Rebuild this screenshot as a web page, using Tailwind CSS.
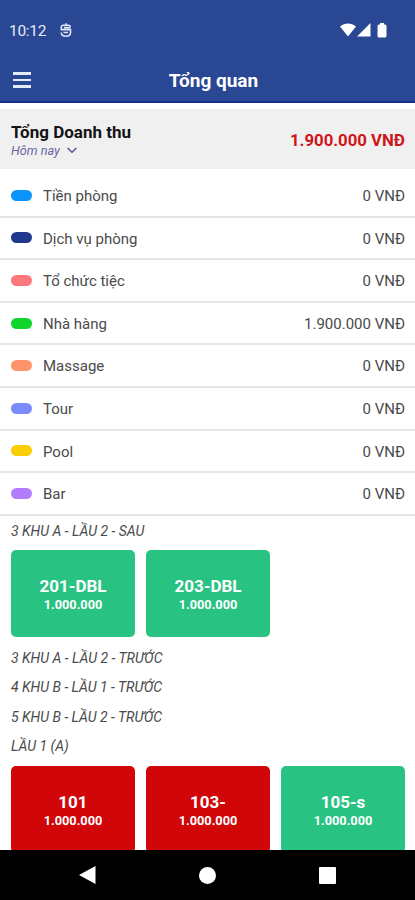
<!DOCTYPE html>
<html lang="vi">
<head>
  <meta charset="UTF-8" />
  <title>Tổng quan</title>
  <meta name="viewport" content="width=device-width, initial-scale=1.0" />
  <script src="https://cdn.jsdelivr.net/npm/@tailwindcss/browser@4"></script>
</head>
<body class="bg-white">
  <div class="w-[415px] h-[900px] overflow-hidden flex flex-col font-['Roboto','Noto_Sans',sans-serif] text-[#4a4a4a]">

    <!-- Status bar and title -->
    <header class="h-[103px] shrink-0 bg-[#2a4793] border-b-2 border-[#12308a] text-white">
      <div class="h-[60px] flex items-center pl-[9px] pr-[28px]">
        <span class="w-[38px] pt-[1px] text-[15.500px] leading-5 tracking-[-0.3px] text-[#e6ebf8]">10:12</span>
        <svg class="ml-[13px] w-3 h-[15px]" viewBox="0 0 12 15" fill="none" stroke="#dce4f6" stroke-width="1.6">
          <path d="M10.500 3.800Q10 2.300 8.500 2.300H3.500Q1.300 2.300 1.300 4.500V6.600H10.500V9.500Q10.500 13.200 6 13.200Q1.300 13.200 1.300 9.500M4 4.600H10.500M3.500 9.500H8M6 .3V2.300" />
        </svg>
        <div class="ml-auto flex items-center">
          <svg class="w-4 h-[14px]" viewBox="0 0 16 14" fill="#fff"><path d="M0 3.500C4.500-.4 11.500-.4 16 3.500L8 13.500Z" /></svg>
          <svg class="ml-[1px] w-[14px] h-[14px]" viewBox="0 0 14 14" fill="#fff"><path d="M13.500 0V13.500H0Z" /></svg>
          <svg class="ml-[6px] w-[10px] h-[15px]" viewBox="0 0 10 15" fill="#fff"><path d="M3 0H7V1.500H8Q9.500 1.500 9.500 3V13Q9.500 14.500 8 14.500H2Q.5 14.500 .5 13V3Q.5 1.500 2 1.500H3Z" /></svg>
        </div>
      </div>
      <div class="h-10 flex items-center pl-[13px] pr-[33px]">
        <div class="w-[18px] flex flex-col gap-1">
          <span class="h-[2.500px] bg-[#e4eaf8]"></span>
          <span class="h-[2.500px] bg-[#e4eaf8]"></span>
          <span class="h-[2.500px] bg-[#e4eaf8]"></span>
        </div>
        <h1 class="flex-1 pl-[14px] pt-[2px] text-center text-[19px] leading-6 font-bold">Tổng quan</h1>
      </div>
    </header>

    <!-- Revenue total -->
    <section class="mt-[6px] h-[60px] shrink-0 bg-[#f0f0f0] pl-[11px] pr-[10px] flex items-center justify-between">
      <div class="pt-[3px]">
        <h2 class="text-[17px] leading-5 font-bold text-[#141414]">Tổng Doanh thu</h2>
        <div class="flex items-center text-[12.700px] leading-[18px] italic text-[#6a68a4]">
          Hôm nay
          <svg class="ml-[7px] w-[10px] h-[7px]" viewBox="0 0 10 7" fill="none" stroke="#403f98" stroke-width="1.200"><path d="M.7 1L5 5.500L9.300 1" /></svg>
        </div>
      </div>
      <span class="pt-[3px] text-[16.750px] font-bold text-[#cf1519]">1.900.000 VNĐ</span>
    </section>

    <!-- Revenue by service -->
    <ul class="shrink-0 pt-[6px] text-[15px]">
      <li class="h-[42.600px] pl-[11px] pr-[10px] flex items-center border-b-2 border-[#e6e6e6]"><span class="w-[21px] h-[11px] rounded-full bg-[#0d94fb] mr-[11px]"></span><span class="pt-[2px]">Tiền phòng</span><span class="ml-auto pt-[2px]">0 VNĐ</span></li>
      <li class="h-[42.600px] pl-[11px] pr-[10px] flex items-center border-b-2 border-[#e6e6e6]"><span class="w-[21px] h-[11px] rounded-full bg-[#21398c] mr-[11px]"></span><span class="pt-[2px]">Dịch vụ phòng</span><span class="ml-auto pt-[2px]">0 VNĐ</span></li>
      <li class="h-[42.600px] pl-[11px] pr-[10px] flex items-center border-b-2 border-[#e6e6e6]"><span class="w-[21px] h-[11px] rounded-full bg-[#fc787b] mr-[11px]"></span><span class="pt-[2px]">Tổ chức tiệc</span><span class="ml-auto pt-[2px]">0 VNĐ</span></li>
      <li class="h-[42.600px] pl-[11px] pr-[10px] flex items-center border-b-2 border-[#e6e6e6]"><span class="w-[21px] h-[11px] rounded-full bg-[#0ed52b] mr-[11px]"></span><span class="pt-[2px]">Nhà hàng</span><span class="ml-auto pt-[2px]">1.900.000 VNĐ</span></li>
      <li class="h-[42.600px] pl-[11px] pr-[10px] flex items-center border-b-2 border-[#e6e6e6]"><span class="w-[21px] h-[11px] rounded-full bg-[#ff946a] mr-[11px]"></span><span class="pt-[2px]">Massage</span><span class="ml-auto pt-[2px]">0 VNĐ</span></li>
      <li class="h-[42.600px] pl-[11px] pr-[10px] flex items-center border-b-2 border-[#e6e6e6]"><span class="w-[21px] h-[11px] rounded-full bg-[#7c8bfc] mr-[11px]"></span><span class="pt-[2px]">Tour</span><span class="ml-auto pt-[2px]">0 VNĐ</span></li>
      <li class="h-[42.600px] pl-[11px] pr-[10px] flex items-center border-b-2 border-[#e6e6e6]"><span class="w-[21px] h-[11px] rounded-full bg-[#fbcd07] mr-[11px]"></span><span class="pt-[2px]">Pool</span><span class="ml-auto pt-[2px]">0 VNĐ</span></li>
      <li class="h-[42.600px] pl-[11px] pr-[10px] flex items-center border-b-2 border-[#e6e6e6]"><span class="w-[21px] h-[11px] rounded-full bg-[#b27dfc] mr-[11px]"></span><span class="pt-[2px]">Bar</span><span class="ml-auto pt-[2px]">0 VNĐ</span></li>
    </ul>

    <!-- Rooms by area -->
    <main class="flex-1 min-h-0 overflow-hidden px-[11px] text-[14px]">
      <h3 class="h-[34px] pt-[5px] leading-5 italic">3 KHU A - LẦU 2 - SAU</h3>
      <div class="grid grid-cols-[124px_124px_124px] gap-[11px] text-white text-center font-bold">
        <div class="h-[87px] rounded-[5px] bg-[#28c382] flex flex-col justify-center pt-[4px]">
          <p class="text-[17px] leading-5">201-DBL</p>
          <p class="text-[12.750px] leading-[18px]">1.000.000</p>
        </div>
        <div class="h-[87px] rounded-[5px] bg-[#28c382] flex flex-col justify-center pt-[4px]">
          <p class="text-[17px] leading-5">203-DBL</p>
          <p class="text-[12.750px] leading-[18px]">1.000.000</p>
        </div>
      </div>
      <div class="pt-[7px] pb-[5px] italic leading-[29.400px]">
        <h3>3 KHU A - LẦU 2 - TRƯỚC</h3>
        <h3>4 KHU B - LẦU 1 - TRƯỚC</h3>
        <h3>5 KHU B - LẦU 2 - TRƯỚC</h3>
        <h3>LẦU 1 (A)</h3>
      </div>
      <div class="grid grid-cols-[124px_124px_124px] gap-[11px] text-white text-center font-bold">
        <div class="h-[87px] rounded-[5px] bg-[#d00609] flex flex-col justify-center pt-[3px]">
          <p class="text-[17px] leading-5">101</p>
          <p class="text-[12.750px] leading-[18px]">1.000.000</p>
        </div>
        <div class="h-[87px] rounded-[5px] bg-[#d00609] flex flex-col justify-center pt-[3px]">
          <p class="text-[17px] leading-5">103-</p>
          <p class="text-[12.750px] leading-[18px]">1.000.000</p>
        </div>
        <div class="h-[87px] rounded-[5px] bg-[#28c382] flex flex-col justify-center pt-[3px]">
          <p class="text-[17px] leading-5">105-s</p>
          <p class="text-[12.750px] leading-[18px]">1.000.000</p>
        </div>
      </div>
    </main>

    <!-- Navigation bar -->
    <nav class="h-[50px] shrink-0 bg-black flex items-center justify-between pl-[79px] pr-[79px]">
      <svg class="w-[17px] h-[18px]" viewBox="0 0 17 18" fill="#fff"><path d="M16.500 0V18L0 9Z" /></svg>
      <span class="w-[17px] h-[17px] rounded-full bg-white"></span>
      <span class="w-[17px] h-[17px] rounded-[1px] bg-white"></span>
    </nav>
  </div>
</body>
</html>
